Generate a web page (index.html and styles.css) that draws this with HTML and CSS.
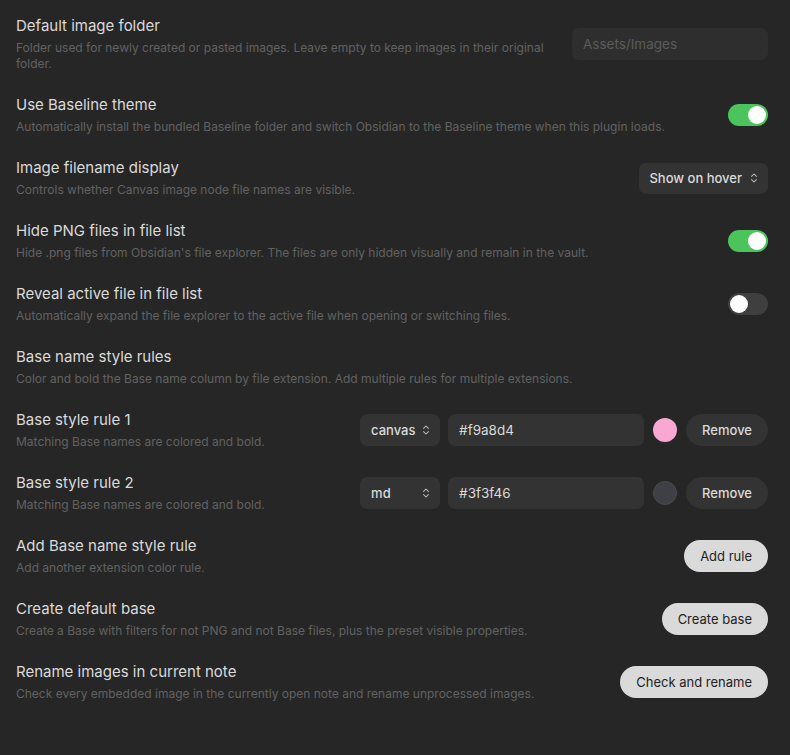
FILE: index.html
```html
<!DOCTYPE html>
<html>
	<head>
		<meta charset="utf-8">
		<title>Settings</title>
		<link rel="stylesheet" href="styles.css">
	</head>
	<body>
		<div class="settings">
			<div class="item">
				<div class="info">
					<div class="name">Default image folder</div>
					<div class="desc">Folder used for newly created or pasted images. Leave empty to keep images in their original folder.</div>
				</div>
				<div class="control">
					<input class="text wide" type="text" placeholder="Assets/Images">
				</div>
			</div>
			<div class="item">
				<div class="info">
					<div class="name">Use Baseline theme</div>
					<div class="desc">Automatically install the bundled Baseline folder and switch Obsidian to the Baseline theme when this plugin loads.</div>
				</div>
				<div class="control"><div class="toggle on"></div></div>
			</div>
			<div class="item">
				<div class="info">
					<div class="name">Image filename display</div>
					<div class="desc">Controls whether Canvas image node file names are visible.</div>
				</div>
				<div class="control">
					<div class="select">Show on hover
						<svg class="chev" viewBox="0 0 10 16"><path d="M2 6l3-3 3 3M2 10l3 3 3-3"/></svg>
					</div>
				</div>
			</div>
			<div class="item">
				<div class="info">
					<div class="name">Hide PNG files in file list</div>
					<div class="desc">Hide .png files from Obsidian's file explorer. The files are only hidden visually and remain in the vault.</div>
				</div>
				<div class="control"><div class="toggle on"></div></div>
			</div>
			<div class="item">
				<div class="info">
					<div class="name">Reveal active file in file list</div>
					<div class="desc">Automatically expand the file explorer to the active file when opening or switching files.</div>
				</div>
				<div class="control"><div class="toggle"></div></div>
			</div>
			<div class="item">
				<div class="info">
					<div class="name">Base name style rules</div>
					<div class="desc">Color and bold the Base name column by file extension. Add multiple rules for multiple extensions.</div>
				</div>
			</div>
			<div class="item">
				<div class="info">
					<div class="name">Base style rule 1</div>
					<div class="desc">Matching Base names are colored and bold.</div>
				</div>
				<div class="control">
					<div class="select ext">canvas
						<svg class="chev" viewBox="0 0 10 16"><path d="M2 6l3-3 3 3M2 10l3 3 3-3"/></svg>
					</div>
					<input class="text" type="text" value="#f9a8d4">
					<span class="swatch" style="background:#f9a8d4"></span>
					<button class="btn">Remove</button>
				</div>
			</div>
			<div class="item">
				<div class="info">
					<div class="name">Base style rule 2</div>
					<div class="desc">Matching Base names are colored and bold.</div>
				</div>
				<div class="control">
					<div class="select ext">md
						<svg class="chev" viewBox="0 0 10 16"><path d="M2 6l3-3 3 3M2 10l3 3 3-3"/></svg>
					</div>
					<input class="text" type="text" value="#3f3f46">
					<span class="swatch dark" style="background:#3f3f46"></span>
					<button class="btn">Remove</button>
				</div>
			</div>
			<div class="item">
				<div class="info">
					<div class="name">Add Base name style rule</div>
					<div class="desc">Add another extension color rule.</div>
				</div>
				<div class="control"><button class="btn light">Add rule</button></div>
			</div>
			<div class="item">
				<div class="info">
					<div class="name">Create default base</div>
					<div class="desc">Create a Base with filters for not PNG and not Base files, plus the preset visible properties.</div>
				</div>
				<div class="control"><button class="btn light">Create base</button></div>
			</div>
			<div class="item">
				<div class="info">
					<div class="name">Rename images in current note</div>
					<div class="desc">Check every embedded image in the currently open note and rename unprocessed images.</div>
				</div>
				<div class="control"><button class="btn light">Check and rename</button></div>
			</div>
		</div>
	</body>
</html>
```

FILE: styles.css
```css
* {margin:0; padding:0; box-sizing:border-box;}
body {background:#262626; font-family:Inter, "Noto Sans", sans-serif; color:#dadada;}

.settings {padding:4px 22px 0 16px;}
.item {display:flex; align-items:center; padding:12px 0 11px;}
.info {flex:1 1 auto; padding-right:20px;}
.name {font-size:15px; line-height:20px; color:#dadada;}
.desc {font-size:12px; line-height:16px; margin-top:4px; color:#626262;}
.control {display:flex; align-items:center; gap:8px; flex-shrink:0;}

.text {height:32px; width:196px; background:#333; border:none; border-radius:7px; padding:0 11px; font:13.5px Inter, sans-serif; color:#dadada; outline:none;}
.text.wide {background:#2e2e2e;}
.text::placeholder {color:#5c5c5c;}

.toggle {width:40px; height:22px; border-radius:11px; background:#3f3f3f; position:relative;}
.toggle:after {content:""; position:absolute; left:2px; top:2px; width:18px; height:18px; border-radius:50%; background:#fff;}
.toggle.on {background:#4bc45c;}
.toggle.on:after {left:20px;}

.select {height:31px; display:flex; align-items:center; background:#333; border-radius:7px; padding:0 10px 0 10px; font-size:13px; font-weight:500; color:#dadada; gap:8px;}
.select.ext {width:80px; justify-content:space-between; height:32px; gap:0; padding-left:11px;}
.chev {width:8px; height:14px; fill:none; stroke:#bbb; stroke-width:1.3; stroke-linecap:round; stroke-linejoin:round;}

.swatch {width:24px; height:24px; border-radius:50%; margin:0 1px;}
.swatch.dark {border:1px solid #4a4a50;}

.btn {height:32px; padding:0 16px; border:none; border-radius:16px; background:#333; color:#dadada; font:500 13px Inter, sans-serif;}
.btn.light {background:#dadada; color:#222; font-weight:400;}
```
